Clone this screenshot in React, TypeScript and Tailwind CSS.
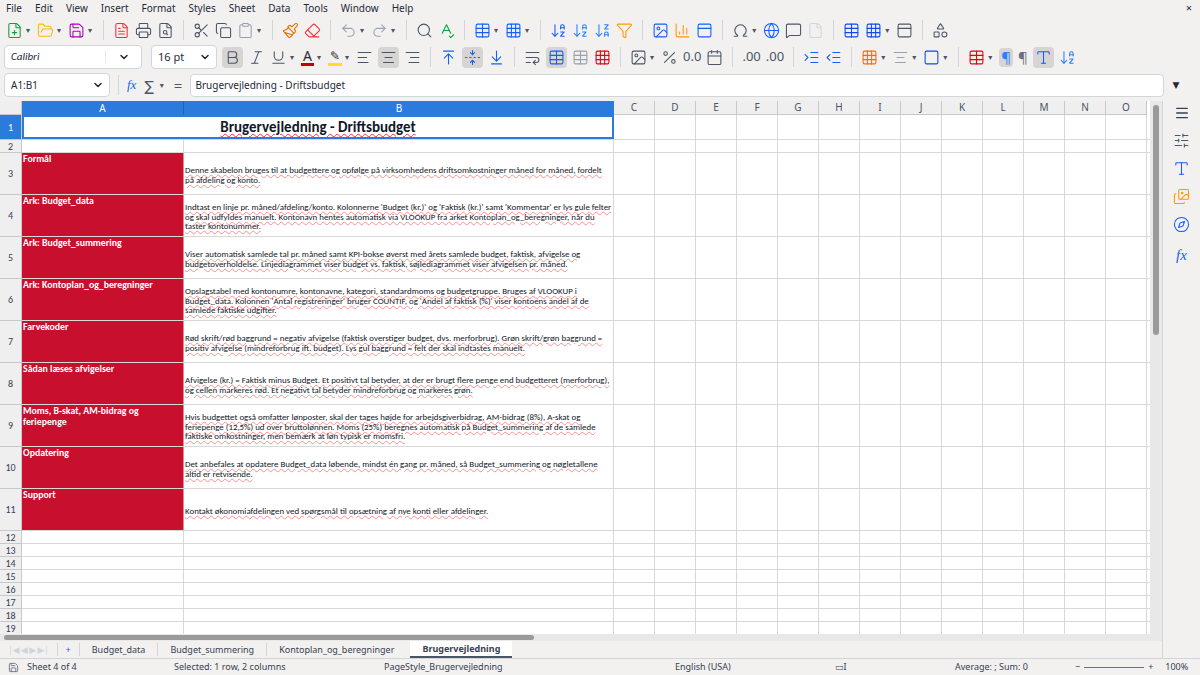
import React from "react";
import {
  FilePlus, FolderOpen, Save, FileText, Printer, FileSearch, Scissors, Copy, Clipboard, Paintbrush, Eraser,
  Undo2, Redo2, Search, SpellCheck, Table, Grid3x3, ArrowDownAZ, ArrowDownZA, Filter, Image, BarChart3,
  Omega, Globe, MessageSquare, File, PanelTop, Shapes, Bold, Italic, Underline, AlignLeft, AlignCenter,
  AlignRight, ArrowUpToLine, FoldVertical, ArrowDownToLine, WrapText, Percent, Calendar, IndentIncrease,
  IndentDecrease, Square, Menu, SlidersHorizontal, Type, Images, Compass, ChevronDown
} from "lucide-react";

const F = { fontFamily: '"Noto Sans","DejaVu Sans",sans-serif' };
const C = { fontFamily: '"Carlito","Liberation Sans","Open Sans",sans-serif' };

const rows: [string, string][] = [
  ["Formål", "Denne skabelon bruges til at budgettere og opfølge på virksomhedens driftsomkostninger måned for måned, fordelt på afdeling og konto."],
  ["Ark: Budget_data", "Indtast en linje pr. måned/afdeling/konto. Kolonnerne 'Budget (kr.)' og 'Faktisk (kr.)' samt 'Kommentar' er lys gule felter og skal udfyldes manuelt. Kontonavn hentes automatisk via VLOOKUP fra arket Kontoplan_og_beregninger, når du taster kontonummer."],
  ["Ark: Budget_summering", "Viser automatisk samlede tal pr. måned samt KPI-bokse øverst med årets samlede budget, faktisk, afvigelse og budgetoverholdelse. Linjediagrammet viser budget vs. faktisk, søjlediagrammet viser afvigelsen pr. måned."],
  ["Ark: Kontoplan_og_beregninger", "Opslagstabel med kontonumre, kontonavne, kategori, standardmoms og budgetgruppe. Bruges af VLOOKUP i Budget_data. Kolonnen 'Antal registreringer' bruger COUNTIF, og 'Andel af faktisk (%)' viser kontoens andel af de samlede faktiske udgifter."],
  ["Farvekoder", "Rød skrift/rød baggrund = negativ afvigelse (faktisk overstiger budget, dvs. merforbrug). Grøn skrift/grøn baggrund = positiv afvigelse (mindreforbrug ift. budget). Lys gul baggrund = felt der skal indtastes manuelt."],
  ["Sådan læses afvigelser", "Afvigelse (kr.) = Faktisk minus Budget. Et positivt tal betyder, at der er brugt flere penge end budgetteret (merforbrug), og cellen markeres rød. Et negativt tal betyder mindreforbrug og markeres grøn."],
  ["Moms, B-skat, AM-bidrag og feriepenge", "Hvis budgettet også omfatter lønposter, skal der tages højde for arbejdsgiverbidrag, AM-bidrag (8%), A-skat og feriepenge (12,5%) ud over bruttolønnen. Moms (25%) beregnes automatisk på Budget_summering af de samlede faktiske omkostninger, men bemærk at løn typisk er momsfri."],
  ["Opdatering", "Det anbefales at opdatere Budget_data løbende, mindst én gang pr. måned, så Budget_summering og nøgletallene altid er retvisende."],
  ["Support", "Kontakt økonomiafdelingen ved spørgsmål til opsætning af nye konti eller afdelinger."],
];

const extraCols = ["C", "D", "E", "F", "G", "H", "I", "J", "K", "L", "M", "N", "O"];

function Ic({ c: Comp, col = "text-gray-600" }: { c: any; col?: string }) {
  return <Comp size={17} strokeWidth={1.5} className={col} />;
}
const Sep = () => <div className="w-px h-5 bg-gray-300 mx-1" />;
const Dd = () => <span className="text-[8px] text-gray-600 -ml-0.5 mr-0.5">▾</span>;

function ExtraCells() {
  return (
    <>
      {extraCols.map((c) => (
        <div key={c} className="w-[41px] shrink-0 border-r border-[#d8d8d8]" />
      ))}
    </>
  );
}

function RowHead({ n, h, active }: { n: number; h: number; active?: boolean }) {
  return (
    <div
      className={`w-[22px] shrink-0 flex items-center justify-center text-[10px] border-r border-b border-[#c8c8c8] ${active ? "bg-[#2a7bdc] text-white" : "bg-[#efefef] text-gray-700"}`}
      style={{ height: h }}
    >
      {n}
    </div>
  );
}

export default function App() {
  return (
    <div className="w-[1200px] h-[675px] bg-[#f2f1f0] flex flex-col overflow-hidden text-gray-800" style={F}>
      {/* menu */}
      <div className="h-[17px] flex items-center text-[10px] px-1.5 gap-[13px] relative">
        {["File", "Edit", "View", "Insert", "Format", "Styles", "Sheet", "Data", "Tools", "Window", "Help"].map((m) => (
          <span key={m}>{m}</span>
        ))}
        <span className="absolute right-2 text-[11px]">×</span>
      </div>
      {/* toolbar 1 */}
      <div className="h-[26px] flex items-center px-1.5 gap-[5px]">
        <Ic c={FilePlus} col="text-green-600" /><Dd />
        <Ic c={FolderOpen} col="text-amber-400" /><Dd />
        <Ic c={Save} col="text-fuchsia-700" /><Dd />
        <Sep />
        <Ic c={FileText} col="text-red-500" /><Ic c={Printer} /><Ic c={FileSearch} />
        <Sep />
        <Ic c={Scissors} /><Ic c={Copy} /><Ic c={Clipboard} col="text-gray-400" /><Dd />
        <Sep />
        <Ic c={Paintbrush} col="text-amber-600" /><Ic c={Eraser} col="text-red-500" />
        <Sep />
        <Ic c={Undo2} col="text-gray-400" /><Dd /><Ic c={Redo2} col="text-gray-400" /><Dd />
        <Sep />
        <Ic c={Search} /><Ic c={SpellCheck} col="text-green-600" />
        <Sep />
        <Ic c={Table} col="text-blue-600" /><Dd /><Ic c={Grid3x3} col="text-blue-600" /><Dd />
        <Sep />
        <Ic c={ArrowDownAZ} col="text-blue-600" /><Ic c={ArrowDownAZ} col="text-blue-500" /><Ic c={ArrowDownZA} col="text-blue-500" /><Ic c={Filter} col="text-amber-500" />
        <Sep />
        <Ic c={Image} col="text-blue-600" /><Ic c={BarChart3} col="text-amber-500" /><Ic c={PanelTop} col="text-blue-600" />
        <Sep />
        <Ic c={Omega} /><Dd /><Ic c={Globe} col="text-blue-600" /><Ic c={MessageSquare} /><Ic c={File} col="text-gray-300" />
        <Sep />
        <Ic c={Table} col="text-blue-700" /><Ic c={Grid3x3} col="text-blue-700" /><Dd /><Ic c={PanelTop} />
        <Sep />
        <Ic c={Shapes} />
      </div>
      {/* toolbar 2 */}
      <div className="h-[28px] flex items-center px-1 gap-[5px]">
        <div className="w-[138px] h-[24px] bg-white border border-gray-300 rounded-sm flex items-center text-[11px] italic">
          <span className="flex-1 pl-1.5" style={C}>Calibri</span>
          <span className="w-[36px] flex justify-center border-l border-gray-200"><ChevronDown size={12} strokeWidth={3} /></span>
        </div>
        <div className="w-[66px] h-[24px] bg-white border border-gray-300 rounded-sm flex items-center text-[11px] ml-1">
          <span className="flex-1 pl-1.5">16 pt</span>
          <span className="w-[22px] flex justify-center"><ChevronDown size={12} strokeWidth={3} /></span>
        </div>
        <div className="bg-[#d6d5d4] rounded px-0.5 py-0.5"><Ic c={Bold} /></div>
        <Ic c={Italic} /><Ic c={Underline} /><Dd />
        <span className="text-[14px] border-b-[3px] border-red-700 leading-[14px] px-0.5">A</span><Dd />
        <span className="text-[12px] border-b-[3px] border-yellow-300 leading-[14px] px-0.5">✎</span><Dd />
        <Ic c={AlignLeft} />
        <div className="bg-[#d6d5d4] rounded p-0.5"><Ic c={AlignCenter} /></div>
        <Ic c={AlignRight} />
        <Sep />
        <Ic c={ArrowUpToLine} col="text-blue-600" />
        <div className="bg-[#d6d5d4] rounded p-0.5"><Ic c={FoldVertical} col="text-blue-600" /></div>
        <Ic c={ArrowDownToLine} col="text-blue-600" />
        <Sep />
        <Ic c={WrapText} />
        <div className="bg-[#d6d5d4] rounded p-0.5"><Ic c={Table} col="text-blue-600" /></div>
        <Ic c={Table} col="text-gray-400" /><Ic c={Grid3x3} col="text-red-600" />
        <Sep />
        <Ic c={Image} /><Dd /><Ic c={Percent} /><span className="text-[13px] text-gray-600">0.0</span><Ic c={Calendar} />
        <Sep />
        <span className="text-[13px] text-gray-600">.00</span><span className="text-[13px] text-gray-600">.00</span>
        <Sep />
        <Ic c={IndentIncrease} col="text-blue-600" /><Ic c={IndentDecrease} col="text-blue-600" />
        <Sep />
        <Ic c={Grid3x3} col="text-orange-500" /><Dd /><Ic c={AlignCenter} col="text-gray-400" /><Dd />
        <Ic c={Square} col="text-blue-700" /><Dd />
        <Sep />
        <Ic c={Table} col="text-red-600" /><Dd />
        <div className="bg-[#d6d5d4] rounded p-0.5 text-[15px] text-blue-500 leading-none">¶</div>
        <span className="text-[15px] text-gray-500">¶</span>
        <div className="bg-[#d6d5d4] rounded p-0.5"><Ic c={Type} col="text-blue-600" /></div>
        <Ic c={ArrowDownAZ} col="text-blue-500" />
      </div>
      {/* formula bar */}
      <div className="h-[28px] flex items-center px-1 gap-2 mb-[2px]">
        <div className="w-[106px] h-[24px] bg-white border border-gray-300 rounded-sm flex items-center text-[10px]">
          <span className="flex-1 pl-1.5">A1:B1</span>
          <span className="w-[22px] flex justify-center"><ChevronDown size={12} strokeWidth={3} /></span>
        </div>
        <div className="w-px h-5 bg-gray-300" />
        <span className="italic text-blue-600 text-[13px]" style={{ fontFamily: '"Liberation Serif",serif' }}>fx</span>
        <span className="text-[14px] text-gray-600">∑</span><Dd />
        <span className="text-[15px] text-gray-600">=</span>
        <div className="w-[974px] h-[23px] bg-white border border-gray-300 rounded-sm text-[10px] flex items-center pl-1">
          Brugervejledning - Driftsbudget
        </div>
        <span className="text-[9px]">▼</span>
      </div>
      {/* main */}
      <div className="flex flex-1 min-h-0">
        <div className="w-[1162px] flex flex-col">
          <div className="flex flex-1 min-h-0">
            <div className="w-[1150px] flex flex-col overflow-hidden bg-white" style={C}>
              {/* column header */}
              <div className="h-[14px] flex shrink-0 text-[10px]" style={F}>
                <div className="w-[22px] bg-[#efefef] border-r border-b border-[#c8c8c8]" />
                <div className="w-[162px] bg-[#2a7bdc] text-white flex justify-center items-center border-r border-[#1e63b8]">A</div>
                <div className="w-[430px] bg-[#2a7bdc] text-white flex justify-center items-center">B</div>
                {extraCols.map((c) => (
                  <div key={c} className="w-[41px] bg-[#efefef] text-gray-600 flex justify-center items-center border-r border-b border-[#c8c8c8]">{c}</div>
                ))}
              </div>
              {/* row 1 */}
              <div className="flex h-[25px] shrink-0 border-b border-[#d8d8d8]">
                <RowHead n={1} h={25} active />
                <div className="w-[592px] border-2 border-[#2a7bdc] flex items-center justify-center text-[15px] font-bold text-gray-900 underline decoration-wavy decoration-red-500 decoration-1">
                  Brugervejledning - Driftsbudget
                </div>
                <ExtraCells />
              </div>
              <div className="flex h-[13px] shrink-0 border-b border-[#d8d8d8]">
                <RowHead n={2} h={13} />
                <div className="w-[162px] border-r border-[#d8d8d8]" />
                <div className="w-[430px] border-r border-[#d8d8d8]" />
                <ExtraCells />
              </div>
              {rows.map(([a, b], i) => (
                <div key={i} className="flex h-[42px] shrink-0 border-b border-[#d8d8d8]">
                  <RowHead n={i + 3} h={42} />
                  <div className="w-[162px] bg-[#c8102e] text-white font-bold text-[9.8px] leading-[11px] px-[1px] pt-[1px] border-r border-white/50">
                    {a}
                  </div>
                  <div className="w-[430px] border-r border-[#d8d8d8] flex items-center text-[8.9px] leading-[9.5px] text-gray-900 px-[1px] pt-1">
                    <span className="underline decoration-wavy decoration-red-400/70 decoration-1 underline-offset-1">{b}</span>
                  </div>
                  <ExtraCells />
                </div>
              ))}
              {[12, 13, 14, 15, 16, 17, 18, 19].map((n) => (
                <div key={n} className="flex h-[13px] shrink-0 border-b border-[#d8d8d8]">
                  <RowHead n={n} h={13} />
                  <div className="w-[162px] border-r border-[#d8d8d8]" />
                  <div className="w-[430px] border-r border-[#d8d8d8]" />
                  <ExtraCells />
                </div>
              ))}
            </div>
            <div className="w-[12px] bg-[#e8e8e8] flex justify-center pt-1">
              <div className="w-[6px] h-[230px] bg-[#9a9a9a] rounded" />
            </div>
          </div>
          <div className="h-[7px] bg-[#e8e8e8] flex items-center px-1">
            <div className="w-[530px] h-[5px] bg-[#9a9a9a] rounded" />
          </div>
          {/* tabs */}
          <div className="h-[17px] flex items-center text-[9px] text-gray-700">
            <span className="text-gray-300 text-[9px] px-2 tracking-tighter">|◀ ◀ ▶ ▶|</span>
            <span className="text-blue-600 px-2 border-l border-gray-300">+</span>
            <span className="px-3 border-l border-gray-300">Budget_data</span>
            <span className="px-3 border-l border-gray-300">Budget_summering</span>
            <span className="px-3 border-l border-gray-300">Kontoplan_og_beregninger</span>
            <span className="px-3 ml-1 bg-white font-bold border-b-2 border-gray-600 h-full flex items-center">Brugervejledning</span>
          </div>
        </div>
        {/* sidebar */}
        <div className="w-[38px] flex flex-col items-center gap-[11px] pt-1 border-l border-gray-300">
          <Menu size={16} className="text-gray-700" />
          <Ic c={SlidersHorizontal} />
          <Ic c={Type} col="text-blue-600" />
          <Ic c={Images} col="text-amber-500" />
          <Ic c={Compass} col="text-blue-600" />
          <span className="italic text-blue-600 text-[15px]" style={{ fontFamily: '"Liberation Serif",serif' }}>fx</span>
        </div>
      </div>
      {/* status bar */}
      <div className="h-[17px] flex items-center text-[9px] text-gray-700 border-t border-gray-300">
        <span className="w-[170px] pl-2 flex items-center gap-2"><Save size={11} className="text-gray-500" />Sheet 4 of 4</span>
        <span className="w-[210px] pl-1">Selected: 1 row, 2 columns</span>
        <span className="w-[295px] pl-1">PageStyle_Brugervejledning</span>
        <span className="w-[160px]">English (USA)</span>
        <span className="w-[120px]">▭I</span>
        <span className="w-[120px]">Average: ; Sum: 0</span>
        <span className="flex items-center gap-1">− <span className="w-[60px] h-px bg-gray-500 inline-block" /> + <span className="ml-2">100%</span></span>
      </div>
    </div>
  );
}
